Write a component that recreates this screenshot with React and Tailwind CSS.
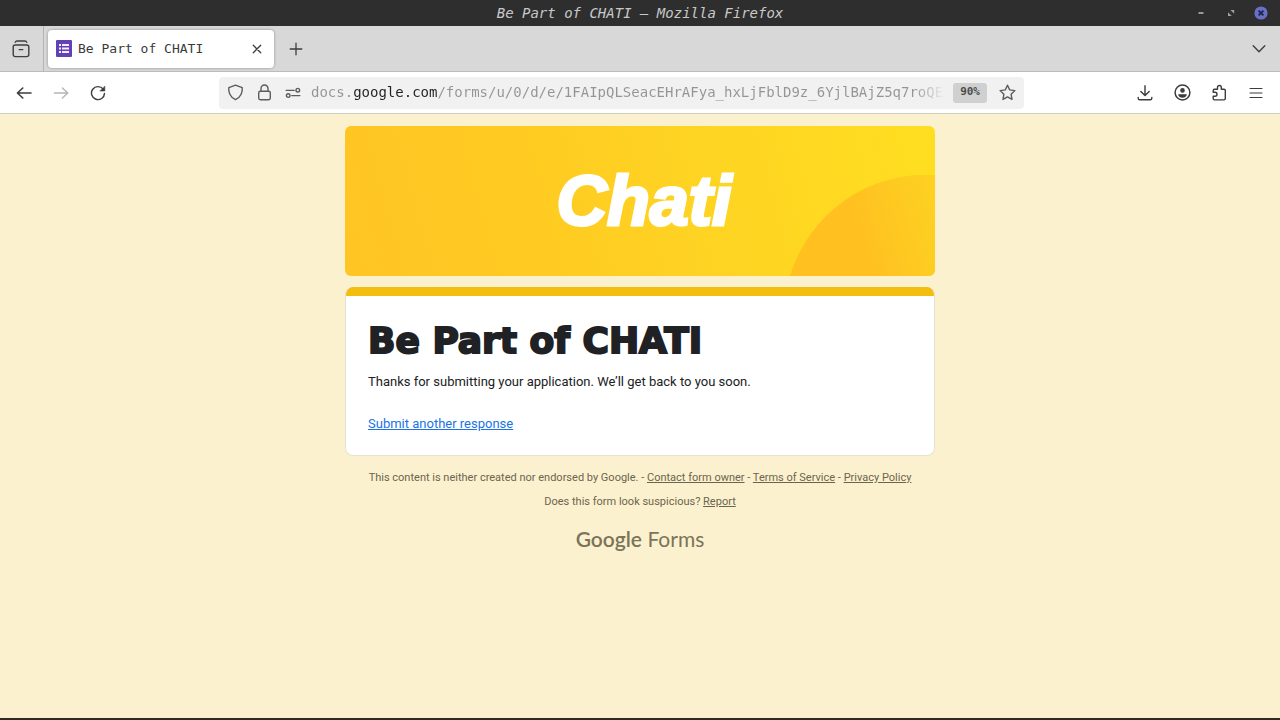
import React from "react";

const Icon = ({ children, className = "", size = 18, view = 18, sw = 1.4 }) => (
  <svg
    width={size}
    height={size}
    viewBox={`0 0 ${view} ${view}`}
    fill="none"
    stroke="currentColor"
    strokeWidth={sw}
    strokeLinecap="round"
    strokeLinejoin="round"
    className={className}
    aria-hidden="true"
  >
    {children}
  </svg>
);

const IconButton = ({ label, children, className = "", ...rest }) => (
  <button
    type="button"
    aria-label={label}
    className={`flex h-8 w-9 shrink-0 items-center justify-center ${className}`}
    {...rest}
  >
    {children}
  </button>
);

function TitleBar() {
  return (
    <header className="grid grid-cols-[1fr_auto_1fr] items-center bg-[#2e2e2e] px-3">
      <h1 className="col-start-2 font-['DejaVu_Sans_Mono',monospace] text-[14px] leading-[26px] italic text-[#c8c8c8]">
        Be Part of CHATI — Mozilla Firefox
      </h1>
      <div className="flex items-center justify-end gap-4">
        <button type="button" aria-label="Minimize" className="flex text-[#b4b4b4]">
          <Icon size={14} view={14} sw={1.6}>
            <path d="M4.5 7h5" strokeLinecap="butt" />
          </Icon>
        </button>
        <button type="button" aria-label="Maximize" className="flex text-[#a0a0a0]">
          <svg width="14" height="14" viewBox="0 0 14 14" fill="currentColor" aria-hidden="true">
            <path d="M6.4 4h3.8v3.8L9 6.6 7.6 5.2zM4 6.3 7.8 10H4z" />
          </svg>
        </button>
        <button type="button" aria-label="Close window" className="flex">
          <svg width="14" height="14" viewBox="0 0 14 14" aria-hidden="true">
            <circle cx="7" cy="7" r="6.6" fill="#6770c4" />
            <path d="m4.6 4.6 4.8 4.8m0-4.8L4.6 9.4" stroke="#20264f" strokeWidth="1.9" />
          </svg>
        </button>
      </div>
    </header>
  );
}

function TabBar() {
  return (
    <div className="flex items-center border-b border-[#bcbcbc] bg-[#d8d8d8] text-[#3e3e3e]">
      <div className="flex h-[45px] items-center border-r border-[#b4b4b4] pr-1 pl-[3px]">
        <IconButton label="View recent browsing">
          <Icon>
            <rect x="1.2" y="5" width="15.6" height="11.6" rx="2" />
            <path d="M3.2 2.2C3.6 1.4 4.2 1 5 1h8c.8 0 1.4.4 1.8 1.2M7.2 9.6h3.6" />
          </Icon>
        </IconButton>
      </div>
      <div className="ml-1 flex h-[38px] w-[226px] items-center rounded bg-white pr-2 pl-2 shadow-[0_0_3px_rgba(0,0,0,0.35)]">
        <svg width="16" height="17" viewBox="0 0 16 17" aria-hidden="true">
          <rect width="16" height="17" rx="1" fill="#6340b5" />
          <path
            d="M3 4h2v2H3zM6 4h7v2H6zM3 7.5h2v2H3zM6 7.5h7v2H6zM3 11h2v2H3zM6 11h7v2H6z"
            fill="#f1ecff"
          />
        </svg>
        <span className="ml-1.5 flex-1 font-['DejaVu_Sans_Mono',monospace] text-[13px] whitespace-nowrap text-[#3a3a3a]">
          Be Part of CHATI
        </span>
        <button type="button" aria-label="Close tab" className="flex h-6 w-[18px] items-center justify-center">
          <Icon size={10} view={10} sw={1.3}>
            <path d="m1.3 1.3 7.4 7.4m0-7.4L1.3 8.7" />
          </Icon>
        </button>
      </div>
      <IconButton label="New tab" className="ml-1">
        <Icon size={14} view={14} sw={1.3}>
          <path d="M7 1.2v11.6M1.2 7h11.6" />
        </Icon>
      </IconButton>
      <IconButton label="List all tabs" className="mr-[3px] ml-auto">
        <Icon size={14} view={14} sw={1.4}>
          <path d="m1.2 3.8 5.8 6 5.8-6" />
        </Icon>
      </IconButton>
    </div>
  );
}

function UrlBar() {
  return (
    <div className="flex h-8 w-full max-w-[805px] min-w-0 items-center rounded-sm bg-[#f1f1f1] px-2 text-[#5c5c5c]">
      <div className="flex items-center gap-3">
        <button type="button" aria-label="Tracking protection" className="flex">
          <Icon size={17} view={17}>
            <path d="M8.5 1.1 15.2 3.7c.5 3.9-1.1 9.6-6.7 12C2.9 13.3 1.3 7.6 1.8 3.7z" />
          </Icon>
        </button>
        <button type="button" aria-label="Connection secure" className="flex">
          <Icon size={17} view={17}>
            <rect x="2.7" y="7.3" width="11.6" height="8.4" rx="1.6" />
            <path d="M5 7.1V4.5a3.5 3.5 0 0 1 7 0v2.6" />
          </Icon>
        </button>
        <button type="button" aria-label="Site permissions" className="flex">
          <Icon size={16} view={16}>
            <path d="M1.2 5.4h8M6.8 10.6h8" />
            <circle cx="12.8" cy="5.2" r="1.8" />
            <circle cx="3.2" cy="10.6" r="1.8" />
          </Icon>
        </button>
      </div>
      <input
        type="text"
        aria-label="Address"
        defaultValue="docs.google.com/forms/u/0/d/e/1FAIpQLSeacEHrAFya_hxLjFblD9z_6YjlBAjZ5q7roQEXw"
        className="ml-[10px] h-8 min-w-0 flex-1 bg-[linear-gradient(to_right,#949494_42px,#222222_42px,#222222_126px,#949494_126px,#949494_calc(100%-32px),transparent)] bg-clip-text pb-0.5 font-['DejaVu_Sans_Mono',monospace] text-[14px] text-transparent caret-black outline-none"
      />
      <button
        type="button"
        className="ml-2 flex h-5 items-center rounded-[3px] bg-[#d0d0d0] px-[7px] font-['DejaVu_Sans_Mono',monospace] text-[11px] font-bold text-[#4c4c4c]"
      >
        90%
      </button>
      <button type="button" aria-label="Bookmark this page" className="ml-3 flex">
        <Icon size={17} view={17} sw={1.4}>
          <path d="m8.5 1.2 2.2 4.7 5.2.7-3.8 3.6.9 5.2-4.5-2.5L4 15.4l.9-5.2L1.1 6.6l5.200-.7z" />
        </Icon>
      </button>
    </div>
  );
}

function NavBar() {
  return (
    <nav aria-label="Browser toolbar" className="flex h-[42px] items-center border-b border-[#cfcfc4] bg-white px-1.5 text-[#3c3c3c]">
      <div className="flex gap-px">
        <IconButton label="Back">
          <Icon size={16} view={16} sw={1.6}>
            <path d="M15 8H1.4M6.8 3 1.4 8l5.4 5" />
          </Icon>
        </IconButton>
        <IconButton label="Forward" disabled className="text-[#b5b5b5]">
          <Icon size={16} view={16} sw={1.4}>
            <path d="M1.4 8H14.6M9.4 3l5.4 5-5.4 5" />
          </Icon>
        </IconButton>
        <IconButton label="Reload">
          <Icon size={16} view={16} sw={1.4}>
            <path d="M13.2 4.2A6.5 6.5 0 1 0 14.5 8.4" />
            <path d="M14.8 1.4V6H10.2z" fill="currentColor" strokeWidth="0.6" />
          </Icon>
        </IconButton>
      </div>
      <div className="flex min-w-0 flex-1 justify-center">
        <UrlBar />
      </div>
      <div className="flex gap-px">
        <IconButton label="Downloads">
          <Icon size={16} view={16} sw={1.4}>
            <path d="M8 .8v9.600M3.800 6.400 8 10.600l4.200-4.200M1.200 12.400v.8c0 1 .6 1.600 1.600 1.600h10.400c1 0 1.600-.6 1.600-1.600v-.8" />
          </Icon>
        </IconButton>
        <IconButton label="Account">
          <Icon size={17} view={17} sw={1.5}>
            <circle cx="8.5" cy="8.5" r="7.4" />
            <circle cx="8.5" cy="6.4" r="2.3" fill="currentColor" stroke="none" />
            <path d="M4.2 10.2h8.600c0 2-1.800 3.600-4.300 3.600s-4.300-1.600-4.300-3.600z" fill="currentColor" stroke="none" />
          </Icon>
        </IconButton>
        <IconButton label="Extensions">
          <Icon size={17} view={17} sw={1.4}>
            <path d="M2.200 8.200V6.600c0-.8.5-1.300 1.300-1.300h3V3.400a1.900 1.900 0 0 1 3.800 0v1.900h2.700c.8 0 1.300.5 1.300 1.300v8c0 .8-.5 1.300-1.300 1.300H3.500c-.8 0-1.300-.5-1.300-1.300v-2.400h1.800a2 2 0 0 0 0-4z" />
          </Icon>
        </IconButton>
        <IconButton label="Open menu">
          <Icon size={14} view={14} sw={1.2}>
            <path d="M1 2.500h12M1 7h12M1 11.500h12" />
          </Icon>
        </IconButton>
      </div>
    </nav>
  );
}

function Banner() {
  return (
    <div className="relative flex h-[150px] items-center justify-center overflow-hidden rounded-md bg-[linear-gradient(75deg,#ffc524_0%,#ffca22_30%,#fed522_65%,#ffde20_100%)]">
      <svg width="146" height="101" viewBox="0 0 146 101" className="absolute right-0 bottom-0" aria-hidden="true">
        <defs>
          <linearGradient id="disc" x1="0" x2="1" y1="0.6" y2="0.4">
            <stop offset="0.45" stopColor="#ffc020" />
            <stop offset="1" stopColor="#fdd022" />
          </linearGradient>
        </defs>
        <path d="M1 101A142 142 0 0 1 146 0V101z" fill="url(#disc)" />
      </svg>
      <span className="relative pl-2 font-['Liberation_Sans',sans-serif] text-[70px] leading-none font-bold text-white italic [-webkit-text-stroke:3px_#fff]">
        Chati
      </span>
    </div>
  );
}

function ResponseCard() {
  return (
    <section className="mt-[11px] overflow-hidden rounded-lg border border-t-0 border-[#e6e2d4] bg-white">
      <div className="h-[9px] bg-[#f3be10]" />
      <div className="px-[22px] pt-[25px] pb-[21px]">
        <h2 className="font-['DejaVu_Sans',sans-serif] text-[36px] leading-[40px] font-bold whitespace-nowrap text-[#202124] [-webkit-text-stroke:2px_#202124]">
          Be Part of CHATI
        </h2>
        <p className="mt-[11px] text-[13px] leading-5 text-[#202124]">
          Thanks for submitting your application. We’ll get back to you soon.
        </p>
        <p className="mt-[22px] text-[13px] leading-5">
          <a href="#form" className="text-[#1a73e8] underline">
            Submit another response
          </a>
        </p>
      </div>
    </section>
  );
}

function Footer() {
  return (
    <footer className="flex flex-col items-center text-[11px] leading-4 text-[#6b654d]">
      <p className="mt-[14px]">
        This content is neither created nor endorsed by Google. -{" "}
        <a href="#owner" className="underline">Contact form owner</a> -{" "}
        <a href="#terms" className="underline">Terms of Service</a> -{" "}
        <a href="#privacy" className="underline">Privacy Policy</a>
      </p>
      <p className="mt-2">
        Does this form look suspicious? <a href="#report" className="underline">Report</a>
      </p>
      <a href="#forms" className="mt-[15px] font-['Lato',sans-serif] text-[21px] leading-7 text-[#7a745a]">
        <span className="font-semibold">Google</span> Forms
      </a>
    </footer>
  );
}

export default function App() {
  return (
    <div className="flex min-h-screen flex-col border-b-2 border-[#2e2b20] bg-[#fcf1cf] font-['Roboto',sans-serif]">
      <TitleBar />
      <TabBar />
      <NavBar />
      <main className="mx-auto w-full max-w-[590px] flex-1 pt-3">
        <Banner />
        <ResponseCard />
        <Footer />
      </main>
    </div>
  );
}
